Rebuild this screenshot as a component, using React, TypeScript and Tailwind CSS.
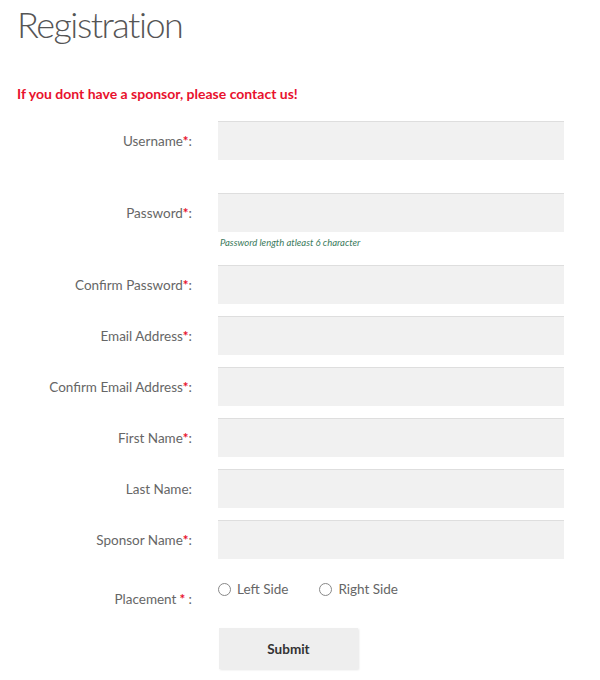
import { FC } from 'react';

type Field = {
   label: string;
   required?: boolean;
   hint?: string;
   extraTop?: boolean;
};

const fields: Field[] = [
   { label: 'Username', required: true },
   { label: 'Password', required: true, hint: 'Password length atleast 6 character', extraTop: true },
   { label: 'Confirm Password', required: true },
   { label: 'Email Address', required: true },
   { label: 'Confirm Email Address', required: true },
   { label: 'First Name', required: true },
   { label: 'Last Name' },
   { label: 'Sponsor Name', required: true },
];

const Row: FC<{ field: Field }> = ({ field }) => {
   return (
      <div className={`flex ${field.extraTop ? 'mt-[33px]' : 'mt-3'}`}>
         <div className="w-[192px] h-[39px] pt-[2px] flex items-center justify-end text-[13.5px] text-[#666]">
            {field.label}
            {field.required && <span className="text-[#e8112d] font-bold">*</span>}:
         </div>
         <div className="ml-[26px] w-[346px]">
            <div className="h-[39px] bg-[#f1f1f1] border-t border-[#dedede]" />
            {field.hint && (
               <div className="mt-[4px] ml-[2px] mb-[3px] h-[14px] text-[9.5px] italic text-[#3b7a5c] leading-[14px]">
                  {field.hint}
               </div>
            )}
         </div>
      </div>
   );
};

const Radio: FC<{ label: string }> = ({ label }) => {
   return (
      <label className="flex items-center gap-[6px] text-[13.5px] text-[#666]">
         <span className="w-[13px] h-[13px] rounded-full border border-[#888] bg-white" />
         {label}
      </label>
   );
};

export default function App() {
   return (
      <div className="w-[600px] h-[680px] bg-white font-['Lato',sans-serif] overflow-hidden">
         <h1 className="pl-[17px] pt-[2px] text-[36px] tracking-[-1.5px] font-light text-[#555] leading-[44px]">
            Registration
         </h1>
         <p className="pl-[17px] mt-[40px] text-[14px] font-bold text-[#e8112d] leading-[16px]">
            If you dont have a sponsor, please contact us!
         </p>
         <div className="mt-[19px]">
            {fields.map((f) => (
               <Row key={f.label} field={f} />
            ))}
         </div>
         <div className="flex mt-[15px]">
            <div className="w-[192px] pt-[15px] flex justify-end text-[13.5px] text-[#666]">
               Placement<span className="text-[#e8112d] font-bold ml-[3px]">*</span>&nbsp;:
            </div>
            <div className="ml-[26px] pt-[5px] flex gap-[31px] h-[25px]">
               <Radio label="Left Side" />
               <Radio label="Right Side" />
            </div>
         </div>
         <div className="ml-[219px] mt-[19px]">
            <button className="w-[139px] h-[41px] bg-[#eee] text-[13.5px] font-bold text-[#333] shadow-[1px_1px_2px_rgba(0,0,0,0.1)]">
               Submit
            </button>
         </div>
      </div>
   );
}
